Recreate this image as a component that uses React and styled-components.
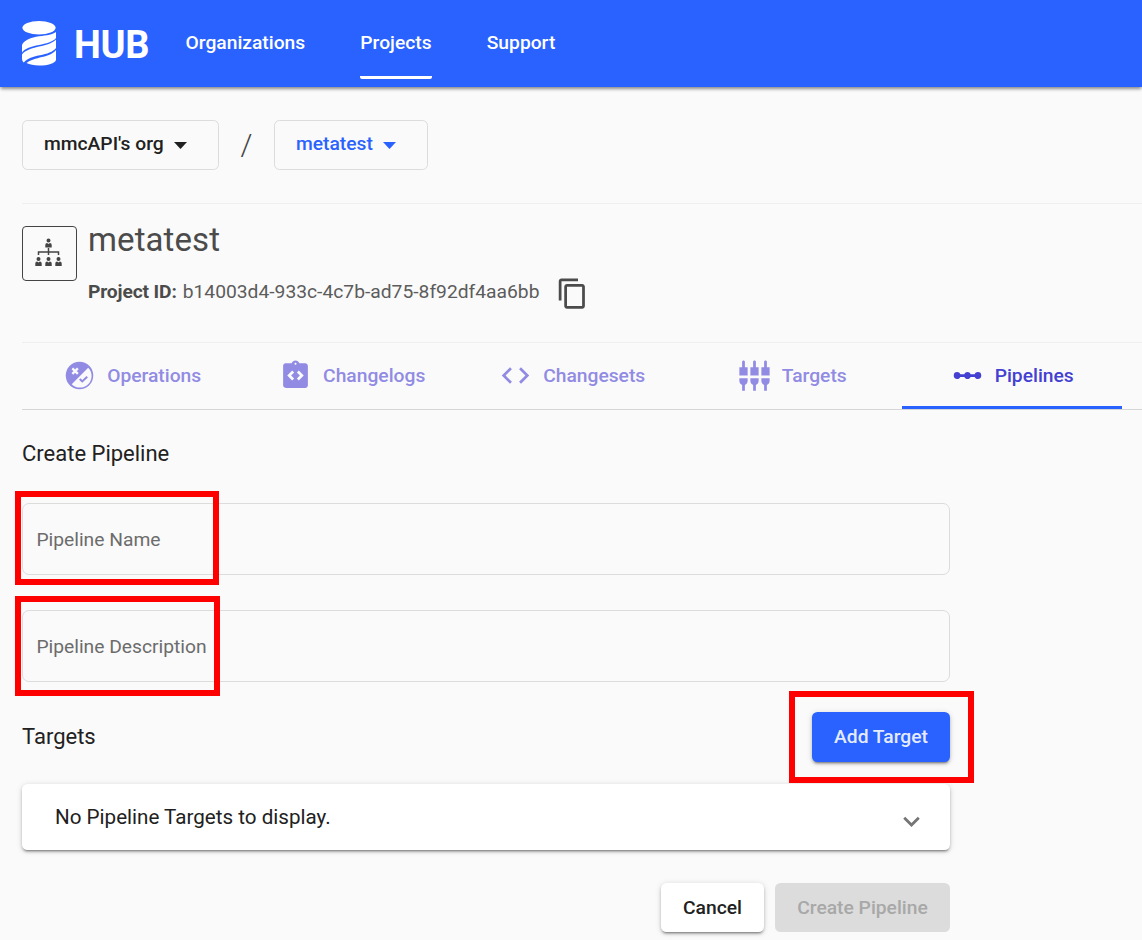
import React from 'react';
import styled, { createGlobalStyle } from 'styled-components';
import {
  MdIntegrationInstructions,
  MdCode,
  MdSettingsInputComponent,
  MdLinearScale,
  MdContentCopy,
  MdExpandMore,
} from 'react-icons/md';

const GlobalStyle = createGlobalStyle`
  *, *::before, *::after { box-sizing: border-box; }
  body {
    margin: 0;
    background: #fafafa;
    color: #212121;
    font-family: Roboto, 'Liberation Sans', sans-serif;
    font-size: 19.25px;
    overflow: hidden;
  }
  button { font: inherit; margin: 0; padding: 0; }
  svg { display: block; flex: none; }
`;

const Page = styled.div`
  position: relative;
  height: 940px;
  overflow: hidden;
`;

const Header = styled.header`
  height: 87px;
  padding-left: 22px;
  display: flex;
  align-items: flex-start;
  background: #2962ff;
  color: #fff;
  box-shadow: 0 3px 3px -1px rgba(0, 0, 0, 0.3), 0 1px 4px rgba(0, 0, 0, 0.25);
`;

const Brand = styled.div`
  display: flex;
  align-items: center;
  gap: 18px;
  height: 87px;
  width: 163.5px;
`;

const Wordmark = styled.span`
  font-size: 38px;
  line-height: 44px;
  font-weight: 700;
  letter-spacing: -0.3px;
  margin-top: 2px;
`;

const Nav = styled.nav`
  display: flex;
  gap: 55.1px;
`;

const NavLink = styled.a`
  height: 79px;
  padding-top: 31px;
  line-height: 23px;
  font-weight: 500;
  border-bottom: 3px solid ${(p) => (p.$active ? '#fff' : 'transparent')};
  border-radius: 2px;
`;

const Main = styled.main`
  padding-left: 22px;
`;

const Breadcrumbs = styled.div`
  display: flex;
  align-items: center;
  height: 117px;
  border-bottom: 1px solid #efefef;
`;

const Picker = styled.button`
  display: flex;
  align-items: center;
  gap: 10px;
  width: ${(p) => p.$width}px;
  height: 50px;
  padding: 0 0 4px 21px;
  background: transparent;
  border: 1px solid #dcdcdc;
  border-radius: 5.5px;
  color: ${(p) => (p.$accent ? '#2962ff' : '#212121')};
  font-weight: 500;

  svg { margin-top: 5px; }
`;

const Separator = styled.span`
  width: 55px;
  margin-top: -2px;
  text-align: center;
  font-size: 30px;
  font-weight: 300;
  color: #444;
`;

const ProjectHead = styled.section`
  display: flex;
  gap: 11px;
  height: 139px;
  padding-top: 22px;
  border-bottom: 1px solid #efefef;
  color: #4b4b4b;
`;

const ProjectBadge = styled.div`
  display: grid;
  place-items: center;
  width: 55px;
  height: 55px;
  padding: 0 2px 2px 0;
  border: 1px solid #444;
  border-radius: 4px;
`;

const ProjectInfo = styled.div`
  display: flex;
  flex-direction: column;
`;

const ProjectName = styled.h1`
  margin: -6px 0 0;
  font-size: 33px;
  line-height: 40px;
  font-weight: 400;
  letter-spacing: 0.1px;
`;

const ProjectId = styled.div`
  display: flex;
  align-items: center;
  height: 33px;
  margin-top: 17px;
  line-height: 24px;

  span, b { margin-top: -3px; }
  span { color: #5c5c5c; }
  b { font-weight: 700; margin-right: 6px; letter-spacing: -0.15px; }
  svg { margin-left: 17px; }
`;

const Tabs = styled.div`
  display: flex;
  height: 67px;
  border-bottom: 1px solid #d6d6d6;
`;

const Tab = styled.div`
  width: 220px;
  height: 66px;
  display: flex;
  align-items: center;
  justify-content: center;
  gap: 11px;
  padding: 0 0 2px 0.4px;
  font-weight: 500;
  color: ${(p) => (p.$active ? '#4340d2' : '#918be4')};
  box-shadow: ${(p) => (p.$active ? 'inset 0 -3px #2962ff' : 'none')};
`;

const Form = styled.section`
  width: 928px;
`;

const SectionTitle = styled.h2`
  margin: 0;
  font-size: 22px;
  line-height: 30px;
  font-weight: 400;
`;

const FormTitle = styled(SectionTitle)`
  padding: 29px 0 34px;
`;

const Field = styled.label`
  display: flex;
  align-items: center;
  height: 72px;
  margin-bottom: 35px;
  padding-left: 13.4px;
  border: 1px solid #dcdcdc;
  border-radius: 7px;
  color: #6c6c6c;
`;

const TargetsRow = styled.div`
  display: flex;
  align-items: center;
  justify-content: space-between;
  height: 50px;
  margin-top: -5px;
`;

const raised = '0 3px 2px -2px rgba(0,0,0,.3), 0 2px 3px rgba(0,0,0,.2), 0 1px 6px rgba(0,0,0,.14)';

const Button = styled.button`
  width: ${(p) => p.$width}px;
  height: ${(p) => (p.$kind === 'primary' ? 50 : 49)}px;
  padding-bottom: ${(p) => (p.$kind === 'primary' ? 1 : 0)}px;
  border: 0;
  border-radius: 5.5px;
  font-weight: 500;
  color: ${(p) => ({ primary: '#e4ebff', plain: '#212121', disabled: '#a8a8a8' })[p.$kind]};
  background: ${(p) => ({ primary: '#2962ff', plain: '#fff', disabled: '#dcdcdc' })[p.$kind]};
  box-shadow: ${(p) => (p.$kind === 'disabled' ? 'none' : raised)};
`;

const Panel = styled.div`
  display: flex;
  align-items: center;
  justify-content: space-between;
  height: 66px;
  margin-top: 22px;
  padding: 0 22px 0 33px;
  background: #fff;
  border-radius: 5.5px;
  box-shadow: ${raised};
  font-size: 20.625px;

  svg { color: #757575; margin-top: 8px; }
`;

const Actions = styled.div`
  display: flex;
  justify-content: flex-end;
  gap: 11px;
  margin-top: 33px;
`;

const Highlight = styled.div`
  position: absolute;
  left: ${(p) => p.$x}px;
  top: ${(p) => p.$y}px;
  width: ${(p) => p.$w}px;
  height: ${(p) => p.$h}px;
  border: 6px solid #f00;
  pointer-events: none;
`;

const Logo = () => (
  <svg width="34" height="45" viewBox="0 0 34 45" fill="#fff">
    <ellipse cx="17" cy="6.800" rx="16.600" ry="6.800" />
    <path d="M34 11V17C31 21 24 22.500 17 24 9 25.500 3 27.500 0 31.500V24C2 19 9 16.800 17 15.300 25 14.300 31 13.500 34 11Z" />
    <path d="M34 18.500V27C31 31 25 32.800 18 34.300 10 35.800 5 37.800 1.800 41.500 .6 40.500 0 39 0 38V33.500C3 29.500 9 27.500 17 25.500 25 24 31 22 34 18.500Z" />
    <path d="M34 29V39C33 42.500 26 44.500 17 44.500 12 44.500 7.500 43.500 4.500 42 8 39 14 37.500 20 36 27 34.500 31.500 32.500 34 29Z" />
  </svg>
);

const Caret = () => (
  <svg width="13" height="7" viewBox="0 0 13 7" fill="currentColor">
    <path d="M0 0H13L6.5 7Z" />
  </svg>
);

const person = 'M0-4.900a2 2 0 1 1 0 4a2 2 0 0 1 0-4ZM-3.200 3.900V1.400Q-3.200-.6-1.400-.6L0 .4 1.400-.6Q3.200-.6 3.200 1.400V3.900Z';

const OrgIcon = () => (
  <svg width="27" height="29" viewBox="0 0 27 29" fill="#444">
    <path d={person} transform="translate(13.5 5.500)" />
    <path d={person} transform="translate(3.500 24)" />
    <path d={person} transform="translate(13.500 24)" />
    <path d={person} transform="translate(23.500 24)" />
    <path d="M13.500 10V17M3.500 17V14H23.500V17" fill="none" stroke="#444" strokeWidth="1.500" />
  </svg>
);

const OperationsIcon = () => (
  <svg width="33" height="33" viewBox="0 0 24 24">
    <circle cx="12" cy="12" r="10" fill="currentColor" />
    <path d="M18.300 6.300A8.100 8.100 0 0 1 6.300 18.300Z" fill="#fafafa" />
    <path d="M6.800 6.800 10.800 10.800M10.800 6.800 6.800 10.800" stroke="#fafafa" strokeWidth="1.700" />
    <path d="M12.200 14.500 14 16.300 17.600 12.900" fill="none" stroke="currentColor" strokeWidth="1.500" />
  </svg>
);

const tabs = [
  { label: 'Operations', Icon: OperationsIcon },
  { label: 'Changelogs', Icon: MdIntegrationInstructions },
  { label: 'Changesets', Icon: MdCode },
  { label: 'Targets', Icon: MdSettingsInputComponent },
  { label: 'Pipelines', Icon: MdLinearScale, active: true },
];

export default function App() {
  return (
    <>
      <GlobalStyle />
      <Page>
        <Header>
          <Brand>
            <Logo />
            <Wordmark>HUB</Wordmark>
          </Brand>
          <Nav>
            <NavLink>Organizations</NavLink>
            <NavLink $active>Projects</NavLink>
            <NavLink>Support</NavLink>
          </Nav>
        </Header>
        <Main>
          <Breadcrumbs>
            <Picker $width={197}>mmcAPI's org <Caret /></Picker>
            <Separator>/</Separator>
            <Picker $width={154} $accent>metatest <Caret /></Picker>
          </Breadcrumbs>
          <ProjectHead>
            <ProjectBadge><OrgIcon /></ProjectBadge>
            <ProjectInfo>
              <ProjectName>metatest</ProjectName>
              <ProjectId>
                <b>Project ID:</b>
                <span>b14003d4-933c-4c7b-ad75-8f92df4aa6bb</span>
                <MdContentCopy size={33} />
              </ProjectId>
            </ProjectInfo>
          </ProjectHead>
          <Tabs>
            {tabs.map(({ label, Icon, active }) => (
              <Tab key={label} $active={active}>
                <Icon size={33} />
                {label}
              </Tab>
            ))}
          </Tabs>
          <Form>
            <FormTitle>Create Pipeline</FormTitle>
            <Field>Pipeline Name</Field>
            <Field>Pipeline Description</Field>
            <TargetsRow>
              <SectionTitle>Targets</SectionTitle>
              <Button $kind="primary" $width={138}>Add Target</Button>
            </TargetsRow>
            <Panel>
              No Pipeline Targets to display.
              <MdExpandMore size={33} />
            </Panel>
            <Actions>
              <Button $kind="plain" $width={103}>Cancel</Button>
              <Button $kind="disabled" $width={175}>Create Pipeline</Button>
            </Actions>
          </Form>
        </Main>
        <Highlight $x={15} $y={491} $w={204} $h={94} />
        <Highlight $x={15} $y={596} $w={205} $h={100} />
        <Highlight $x={789} $y={691} $w={185} $h={92} />
      </Page>
    </>
  );
}
